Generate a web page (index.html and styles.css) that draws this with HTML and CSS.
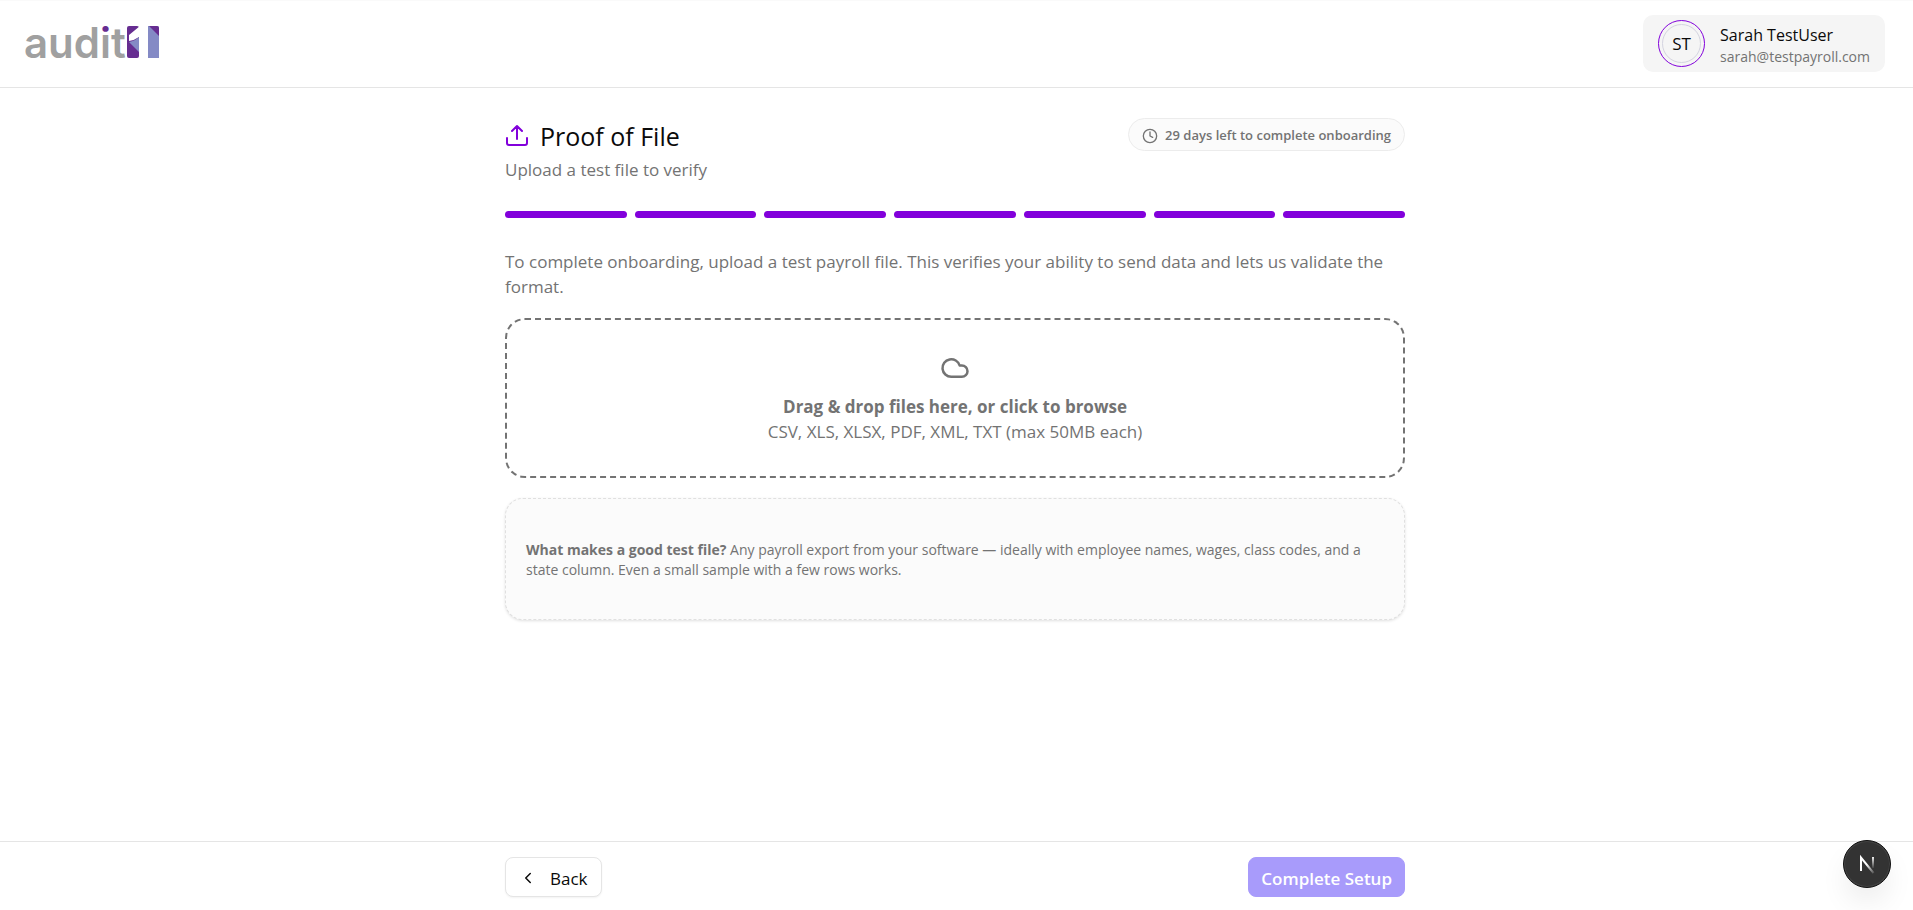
FILE: index.html
```html
<!DOCTYPE html>
<html lang="en">
<head>
  <meta charset="UTF-8" />
  <meta name="viewport" content="width=device-width, initial-scale=1" />
  <title>Proof of File - audit1</title>
  <link rel="stylesheet" href="styles.css">
</head>
<body>
  <header class="header">
    <a class="logo" href="#" aria-label="audit1">
      <svg width="136" height="54" viewBox="0 -9 136 54">
        <defs>
          <linearGradient id="dot" x1="0" y1="0" x2="0" y2="16" gradientUnits="userSpaceOnUse">
            <stop offset="0.450" stop-color="#662d91" />
            <stop offset="0.450" stop-color="#a0a0a0" />
          </linearGradient>
        </defs>
        <text class="logo-text" x="-1" y="32">aud<tspan fill="url(#dot)">i</tspan>t</text>
        <rect x="102" y="0" width="12" height="32" rx="2" fill="#662d91" />
        <path d="M115 0L104 9v6q6-1 10-4h1z" fill="#fff" />
        <path d="M104 16q6-1 10-5v15z" fill="#848ac5" />
        <path d="M123 0h9q2 0 2 2v30h-11z" fill="#848ac5" />
        <path d="M124 0h8q2 0 2 2v8z" fill="#662d91" />
      </svg>
    </a>
    <button class="user" type="button">
      <span class="avatar"><span class="avatar-inner">ST</span></span>
      <span class="user-info">
        <span class="user-name">Sarah TestUser</span>
        <span class="user-email">sarah@testpayroll.com</span>
      </span>
    </button>
  </header>

  <main class="main">
    <div class="container">
      <div class="top">
        <div>
          <h1 class="title">
            <svg class="title-icon" width="24" height="24" viewBox="0 0 24 24">
              <path d="M2 14v5a2 2 0 0 0 2 2h16a2 2 0 0 0 2-2v-5M12 15V2M7 7l5-5 5 5" />
            </svg>
            Proof of File
          </h1>
          <p class="subtitle">Upload a test file to verify</p>
        </div>
        <div class="badge">
          <svg class="badge-icon" width="16" height="16" viewBox="0 0 24 24">
            <circle cx="12" cy="12" r="10" />
            <path d="M12 6v6l4 2" />
          </svg>
          29 days left to complete onboarding
        </div>
      </div>

      <div class="steps">
        <span class="step"></span>
        <span class="step"></span>
        <span class="step"></span>
        <span class="step"></span>
        <span class="step"></span>
        <span class="step"></span>
        <span class="step"></span>
      </div>

      <p class="intro">To complete onboarding, upload a test payroll file. This verifies your ability to send data and lets us validate the format.</p>

      <label class="dropzone" for="files">
        <svg class="cloud" width="30" height="32" viewBox="0 0 24 24">
          <path d="M17.500 19H9a7 7 0 1 1 6.710-9h1.790a4.500 4.500 0 1 1 0 9Z" />
        </svg>
        <strong class="drop-title">Drag &amp; drop files here, or click to browse</strong>
        <span>CSV, XLS, XLSX, PDF, XML, TXT (max 50MB each)</span>
        <input class="file-input" type="file" id="files" name="files" accept=".csv,.xls,.xlsx,.pdf,.xml,.txt" multiple />
      </label>

      <div class="card">
        <p><strong>What makes a good test file?</strong> Any payroll export from your software — ideally with employee names, wages, class codes, and a state column. Even a small sample with a few rows works.</p>
      </div>
    </div>
  </main>

  <footer class="footer">
    <div class="container actions">
      <button class="btn btn-back" type="button">
        <svg class="chevron" width="18" height="18" viewBox="0 0 24 24">
          <path d="M15 18l-6-6 6-6" />
        </svg>
        Back
      </button>
      <button class="btn btn-primary" type="button" disabled>Complete Setup</button>
    </div>
  </footer>

  <button class="dev-badge" type="button" aria-label="Open dev tools">
    <svg width="24" height="24" viewBox="0 0 24 24">
      <defs>
        <linearGradient id="diag" x1="12" y1="12" x2="19" y2="20" gradientUnits="userSpaceOnUse">
          <stop stop-color="#fff" />
          <stop offset="1" stop-color="#fff" stop-opacity="0.200" />
        </linearGradient>
        <linearGradient id="stem" x1="0" y1="4" x2="0" y2="17" gradientUnits="userSpaceOnUse">
          <stop stop-color="#fff" />
          <stop offset="1" stop-color="#fff" stop-opacity="0" />
        </linearGradient>
      </defs>
      <path d="M6 19V5.500L18.500 21" fill="none" stroke="url(#diag)" stroke-width="2" />
      <path d="M6 19V5" stroke="#fff" stroke-width="2" />
      <path d="M18 5v11" stroke="url(#stem)" stroke-width="2" />
    </svg>
  </button>
</body>
</html>
```
FILE: styles.css
```css
* {
  box-sizing: border-box;
}
body {
  font-family: "Open Sans", "Noto Sans", sans-serif;
  font-size: 17px;
  line-height: 25px;
  color: #0a0a0a;
  background: #fff;
  margin: 0;
  min-height: 100vh;
  display: flex;
  flex-direction: column;
}
h1, p {
  margin: 0;
  font-weight: 400;
}
svg {
  flex-shrink: 0;
}
button {
  font: inherit;
  color: inherit;
  cursor: pointer;
}

/* header */
.header {
  display: flex;
  align-items: center;
  justify-content: space-between;
  min-height: 88px;
  padding: 0 28px 1px 25px;
  border-top: 1px solid #fafafa;
  border-bottom: 1px solid #e5e5e5;
}
.logo svg {
  display: block;
}
.logo-text {
  font-family: Inter, sans-serif;
  font-size: 42px;
  font-weight: 600;
  fill: #a0a0a0;
}
.user {
  display: flex;
  align-items: center;
  gap: 15px;
  padding: 5px 15px;
  border: 0;
  border-radius: 10px;
  background: #f5f5f5;
  text-align: left;
}
.avatar {
  display: flex;
  padding: 3px;
  border: 1px solid #8200db;
  border-radius: 50%;
}
.avatar-inner {
  display: flex;
  align-items: center;
  justify-content: center;
  width: 39px;
  height: 39px;
  border: 1px solid #d4d4e0;
  border-radius: 50%;
}
.user-info {
  display: flex;
  flex-direction: column;
  padding-top: 2px;
}
.user-name {
  font-size: 16px;
  font-weight: 500;
  line-height: 24px;
}
.user-email {
  font-size: 14px;
  line-height: 20px;
  color: #737373;
}

/* content */
.main {
  flex: 1;
  padding: 30px 3px 30px 0;
}
.container {
  width: 100%;
  max-width: 900px;
  margin: 0 auto;
}
.top {
  display: flex;
  align-items: flex-start;
  justify-content: space-between;
}
.title {
  display: flex;
  align-items: center;
  gap: 11px;
  margin-bottom: 3px;
  font-size: 25px;
  font-weight: 500;
  line-height: 36px;
}
.title-icon, .badge-icon, .cloud, .chevron {
  fill: none;
  stroke: currentColor;
  stroke-width: 2;
  stroke-linecap: round;
  stroke-linejoin: round;
}
.title-icon {
  color: #8200db;
}
.subtitle {
  color: #737373;
}
.badge {
  display: flex;
  align-items: center;
  gap: 7px;
  padding: 6px 13px 4px;
  border: 1px solid #ececec;
  border-radius: 20px;
  background: #fbfbfb;
  color: #737373;
  font-size: 13px;
  font-weight: 600;
  line-height: 21px;
}
.steps {
  display: flex;
  gap: 8px;
  margin-top: 29px;
}
.step {
  flex: 1;
  height: 7px;
  border-radius: 4px;
  background: #8200db;
}
.intro {
  margin: 31px 0 19px;
  color: #737373;
}
.dropzone {
  position: relative;
  display: flex;
  flex-direction: column;
  align-items: center;
  padding: 32px 20px;
  border: 2px dashed #737373;
  border-radius: 20px;
  color: #737373;
  text-align: center;
  cursor: pointer;
}
.cloud {
  margin-bottom: 10px;
}
.drop-title {
  font-weight: 700;
}
.file-input {
  position: absolute;
  bottom: 8px;
  left: 50%;
  width: 1px;
  height: 1px;
  font-size: 0;
  opacity: 0;
}
.file-input::file-selector-button {
  display: none;
}
.card {
  margin-top: 20px;
  padding: 41px 20px 39px;
  border: 1px dashed #e0e0e0;
  border-radius: 18px;
  background: #fbfbfb;
  box-shadow: 0 1px 3px rgba(0, 0, 0, 0.120);
  color: #737373;
  font-size: 14px;
  line-height: 20px;
}

/* footer */
.footer {
  padding: 15px 3px 13px 0;
  border-top: 1px solid #e5e5e5;
}
.actions {
  display: flex;
  justify-content: space-between;
}
.btn {
  display: flex;
  align-items: center;
  height: 40px;
  padding: 2px 13px 0;
  border: 1px solid #e5e5e5;
  border-radius: 8px;
  background: #fff;
  font-weight: 500;
}
.btn-back {
  gap: 13px;
  box-shadow: 0 1px 2px rgba(0, 0, 0, 0.050);
}
.btn-primary {
  padding: 2px 12px 0;
  border-color: #a89bfb;
  background: #a89bfb;
  color: #fff;
  font-weight: 600;
  cursor: default;
}
.dev-badge {
  position: fixed;
  right: 22px;
  bottom: 22px;
  display: flex;
  align-items: center;
  justify-content: center;
  width: 48px;
  height: 48px;
  padding: 0;
  border: 1px solid #111;
  border-radius: 50%;
  background: #333;
  box-shadow: inset 0 0 0 1px #444, 0 16px 32px -8px rgba(0, 0, 0, 0.140);
}
```
